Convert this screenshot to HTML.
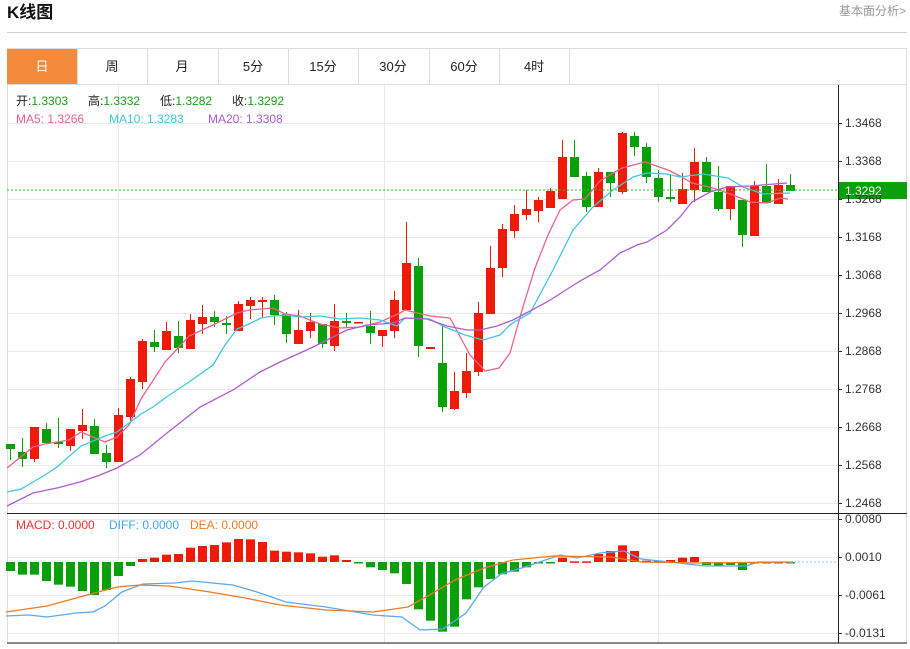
<!DOCTYPE html>
<html><head><meta charset="utf-8"><style>
body{margin:0;width:910px;height:644px;overflow:hidden;background:#fff;font-family:"Liberation Sans","Noto Sans CJK SC",sans-serif;}
svg text{font-family:"Liberation Sans","Noto Sans CJK SC",sans-serif;}
</style></head><body>
<svg id="s" width="910" height="644" xmlns="http://www.w3.org/2000/svg">
<text x="7" y="18" font-size="17" font-weight="bold" fill="#111">K线图</text>
<text x="906" y="15" font-size="12" fill="#999" text-anchor="end">基本面分析&gt;</text>
<line x1="7" y1="32.5" x2="907" y2="32.5" stroke="#d0d0d0"/>
<rect x="7.5" y="48.5" width="899" height="595" fill="none" stroke="#ddd"/>
<rect x="7" y="49" width="70" height="35" fill="#f28c3c"/>
<g stroke="#ddd"><line x1="7" y1="84.5" x2="907" y2="84.5"/>
<line x1="147.5" y1="49" x2="147.5" y2="84"/><line x1="218.5" y1="49" x2="218.5" y2="84"/><line x1="288.5" y1="49" x2="288.5" y2="84"/><line x1="358.5" y1="49" x2="358.5" y2="84"/><line x1="429.5" y1="49" x2="429.5" y2="84"/><line x1="499.5" y1="49" x2="499.5" y2="84"/><line x1="569.5" y1="49" x2="569.5" y2="84"/><line x1="77.5" y1="49" x2="77.5" y2="84"/></g>
<g font-size="13" text-anchor="middle" fill="#222">
<text x="42" y="71" fill="#fff">日</text><text x="112" y="71">周</text><text x="182" y="71">月</text><text x="253" y="71">5分</text><text x="323" y="71">15分</text><text x="393" y="71">30分</text><text x="464" y="71">60分</text><text x="534" y="71">4时</text></g>
<g id="grid" stroke="#e4eaf0"></g>
<g id="g"></g>
<line x1="838.5" y1="85" x2="838.5" y2="643" stroke="#222"/>
<line x1="7" y1="513.5" x2="907" y2="513.5" stroke="#222"/>
<line x1="7" y1="643" x2="907" y2="643" stroke="#222"/>
<line x1="7" y1="190" x2="838" y2="190" stroke="#2cc02c" stroke-dasharray="2,2"/>
<line x1="790" y1="562" x2="838" y2="562" stroke="#7ccbe8" stroke-dasharray="2,2"/>
<rect x="839" y="182" width="68" height="17" fill="#0aa00a"/>
<text x="845" y="195" font-size="12" fill="#fff">1.3292</text>
<g font-size="12">
<text x="16" y="105" fill="#222">开:<tspan fill="#1a9e1a">1.3303</tspan></text>
<text x="88" y="105" fill="#222">高:<tspan fill="#1a9e1a">1.3332</tspan></text>
<text x="160" y="105" fill="#222">低:<tspan fill="#1a9e1a">1.3282</tspan></text>
<text x="232" y="105" fill="#222">收:<tspan fill="#1a9e1a">1.3292</tspan></text>
<text x="16" y="123" fill="#f0608a">MA5: 1.3266</text>
<text x="109" y="123" fill="#40c8e0">MA10: 1.3283</text>
<text x="208" y="123" fill="#b05ad0">MA20: 1.3308</text>
<text x="16" y="529" fill="#f03030">MACD: 0.0000</text>
<text x="109" y="529" fill="#40a8f0">DIFF: 0.0000</text>
<text x="190" y="529" fill="#f07a20">DEA: 0.0000</text>
</g>
<g id="ax" font-size="12" fill="#333"></g>
</svg>
<script>
var NS="http://www.w3.org/2000/svg";
function el(p,t,a){var e=document.createElementNS(NS,t);for(var k in a)e.setAttribute(k,a[k]);document.getElementById(p).appendChild(e);return e;}
var prices=[["1.3468",123],["1.3368",161],["1.3268",199],["1.3168",237],["1.3068",275],["1.2968",313],["1.2868",351],["1.2768",389],["1.2668",427],["1.2568",465],["1.2468",503]];
prices.forEach(function(p){el("grid","line",{x1:7,x2:838,y1:p[1]+.5,y2:p[1]+.5});el("ax","line",{x1:838,x2:842,y1:p[1]+.5,y2:p[1]+.5,stroke:"#333"});var t=el("ax","text",{x:845,y:p[1]+4});t.textContent=p[0];});
var m=[["0.0080",519],["0.0010",557],["-0.0061",595],["-0.0131",633]];
m.forEach(function(p){el("grid","line",{x1:7,x2:838,y1:p[1]+.5,y2:p[1]+.5});el("ax","line",{x1:838,x2:842,y1:p[1]+.5,y2:p[1]+.5,stroke:"#333"});var t=el("ax","text",{x:845,y:p[1]+4});t.textContent=p[0];});
[118,384,658].forEach(function(x){el("grid","line",{x1:x+.5,x2:x+.5,y1:85,y2:643});});
var C=[[444,449,444,460,0],[452,459,438,467,0],[427,459,427,462,1],[429,443,423,443,0],[442,444,418,448,0],[429,446,429,451,1],[425,431,409,439,1],[426,454,419,454,0],[453,462,445,468,0],[415,462,408,462,1],[379,417,377,423,1],[341,382,339,389,1],[342,347,330,352,0],[331,350,322,350,1],[336,348,321,353,0],[320,349,314,349,1],[317,324,305,334,1],[317,322,311,327,0],[323,325,316,334,0],[304,331,301,331,1],[300,306,297,319,1],[300,302,297,318,1],[300,315,295,325,0],[314,334,312,343,0],[330,344,310,344,1],[322,331,313,338,1],[324,344,324,348,0],[321,346,304,351,1],[321,323,313,327,0],[322,323,322,323,1],[326,333,311,344,0],[330,336,330,347,1],[300,331,291,338,1],[263,310,222,310,1],[266,346,258,357,0],[347,349,347,349,1],[363,407,326,412,0],[391,409,372,410,1],[371,393,353,398,1],[313,372,302,376,1],[268,314,246,314,1],[229,268,224,277,1],[214,231,205,238,1],[209,215,190,220,1],[200,211,197,222,1],[191,208,188,208,1],[157,199,140,199,1],[157,177,140,177,0],[176,207,172,212,0],[172,207,168,207,1],[172,183,172,197,0],[133,192,132,194,1],[136,147,132,156,0],[147,177,143,183,0],[178,197,170,202,0],[197,199,175,202,0],[189,204,173,204,1],[162,190,148,202,1],[162,192,157,192,0],[192,209,166,211,0],[186,209,186,220,1],[200,235,200,247,0],[186,236,181,236,1],[186,203,164,203,0],[185,204,179,204,1],[185,191,174,191,0]];
var RED="#f01a0a",GRN="#0aa00a";
C.forEach(function(c,i){var x=10+12*i;var col=c[4]?RED:GRN;
el("g","line",{x1:x+.5,x2:x+.5,y1:c[2],y2:c[3],stroke:col});
el("g","rect",{x:x-4,y:c[0],width:9,height:Math.max(1.5,c[1]-c[0]),fill:col});});
function pl(pts,col){el("g","polyline",{points:pts,fill:"none",stroke:col,"stroke-width":1.3});}
pl("7,468 33,447 45,444 69,440 81,432 105,442 117,437 129,425 141,399 165,362 189,336 213,325 237,313 249,310 261,309 273,308 285,314 300,316 320,324 340,328 360,327 380,322 400,313 405,310 430,316 450,318 470,355 485,371 499,368 510,353 522,310 535,268 548,235 560,210 573,200 585,199 600,181 622,168 645,162 668,170 680,176 692,183 713,188 733,195 750,202 767,203 780,198 788,199","#f0608a");
pl("7,492 21,489 45,475 57,467 81,446 105,436 117,432 141,414 153,407 165,398 189,382 213,365 225,345 237,329 249,324 261,318 273,316 285,315 300,317 320,316 340,319 360,318 380,320 397,326 405,318 430,319 445,327 465,335 483,340 500,335 511,324 530,313 553,270 573,230 593,207 613,190 633,177 647,173 667,174 680,177 703,174 728,178 743,187 763,194 790,193","#40c8e0");
pl("7,506 33,493 57,488 80,482 100,475 117,468 140,455 167,433 200,407 233,390 260,372 280,362 300,353 313,347 347,330 367,325 393,323 405,318 427,319 447,326 467,330 480,330 497,326 513,320 547,302 580,281 600,270 620,253 637,245 647,242 667,230 680,217 692,202 710,192 727,187 750,186 787,183","#b05ad0");
var H=[273,284,284,303,314,320,333,345,330,288,258,237,233,224,222,203,198,195,187,177,178,186,212,215,217,220,230,226,240,248,262,270,280,312,388,422,455,440,358,322,297,283,275,262,250,247,233,244,244,222,213,196,213,242,242,240,233,231,255,258,255,270,250,248,250,248];
H.forEach(function(h,i){var x=10+12*i;var y=480+h/3,z=562;var top=Math.min(y,z),ht=Math.max(1.5,Math.abs(y-z));
el("g","rect",{x:x-4,y:top,width:9,height:ht,fill:y<z?RED:GRN});});
pl("6,616 29,615 47,617 76,613 93,612 105,606 122,592 143,584 175,583 192,581 233,585 257,592 286,602 326,607 373,615 402,617 420,630 443,629 466,613 484,587 501,574 525,567 560,555 577,558 600,553 624,551 641,559 670,562 705,566 746,566 758,562 793,562","#5aaaf0");
pl("6,612 47,606 87,595 117,587 140,585 169,586 210,592 245,598 280,605 326,610 373,612 408,607 426,597 455,580 484,568 513,560 554,556 612,557 641,562 700,563 793,562","#f07a20");
</script>
</body></html>
